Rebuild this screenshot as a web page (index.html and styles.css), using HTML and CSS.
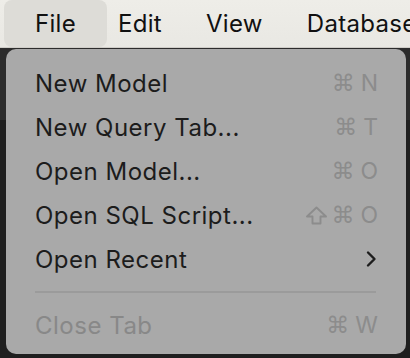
FILE: index.html
```html
<!DOCTYPE html>
<html lang="en">
<head>
    <meta charset="UTF-8">
    <meta name="viewport" content="width=device-width, initial-scale=1.0">
    <title>File menu</title>
    <link rel="stylesheet" href="styles.css">
</head>
<body>
    <nav class="menubar">
        <div class="menubar-item active">File</div>
        <div class="menubar-item">Edit</div>
        <div class="menubar-item">View</div>
        <div class="menubar-item">Database</div>
    </nav>

    <div class="stage">
        <div class="dropdown">
            <div class="menu-row">
                <span class="label">New Model</span>
                <span class="shortcut"><span class="cmd">&#8984;</span>N</span>
            </div>
            <div class="menu-row">
                <span class="label">New Query Tab...</span>
                <span class="shortcut"><span class="cmd">&#8984;</span>T</span>
            </div>
            <div class="menu-row">
                <span class="label">Open Model...</span>
                <span class="shortcut"><span class="cmd">&#8984;</span>O</span>
            </div>
            <div class="menu-row">
                <span class="label">Open SQL Script...</span>
                <span class="shortcut">
                    <svg class="shift" width="23" height="19" viewBox="0 0 23 19">
                        <path d="M11.5 1.5 L21 10.5 L15.5 10.5 L15.5 17.5 L7.5 17.5 L7.5 10.5 L2 10.5 Z" fill="none" stroke="#8c8c8c" stroke-width="1.9" stroke-linejoin="round"/>
                    </svg>
                    <span class="cmd">&#8984;</span>O
                </span>
            </div>
            <div class="menu-row">
                <span class="label">Open Recent</span>
                <svg class="chevron" width="14" height="20" viewBox="0 0 14 20">
                    <path d="M4 3.5 L10.5 10 L4 16.5" fill="none" stroke="#1d1d1d" stroke-width="2.4" stroke-linecap="round" stroke-linejoin="round"/>
                </svg>
            </div>
            <div class="separator"></div>
            <div class="menu-row disabled">
                <span class="label">Close Tab</span>
                <span class="shortcut"><span class="cmd">&#8984;</span>W</span>
            </div>
        </div>
    </div>
</body>
</html>
```

FILE: styles.css
```css
body {
    margin: 0;
    width: 410px;
    height: 358px;
    overflow: hidden;
    font-family: Inter, "Noto Sans", sans-serif;
    background-color: #1f1f1f;
}
.menubar {
    height: 47px;
    background: linear-gradient(to bottom, #eeede8, #e9e8e3);
    display: flex;
    align-items: stretch;
    gap: 44px;
    padding-left: 4px;
    border-bottom: 1px solid #cfcdc8;
}
.menubar-item {
    display: flex;
    align-items: center;
    flex-shrink: 0;
    font-size: 24px;
    letter-spacing: 0.3px;
    color: #111;
    white-space: nowrap;
}
.menubar-item.active {
    width: 103px;
    justify-content: center;
    background-color: #dddcd7;
    border-radius: 8px;
    margin-right: -33px;
}
.stage {
    padding: 1px 4px 0 6px;
    background: linear-gradient(to bottom, #2c2c2c 0, #2c2c2c 72px, #1f1f1f 72px);
}
.dropdown {
    height: 305px;
    background-color: #a9a9a9;
    border-radius: 10px;
    padding: 12px 28px 0 29px;
    box-sizing: border-box;
}
.menu-row {
    height: 44px;
    display: flex;
    align-items: center;
    justify-content: space-between;
    font-size: 24px;
    letter-spacing: 0.5px;
    color: #1c1c1c;
}
.shortcut {
    display: flex;
    align-items: center;
    color: #8c8c8c;
    font-size: 23px;
    letter-spacing: 0;
}
.shortcut .cmd {
    font-family: "DejaVu Sans", sans-serif;
    font-size: 23px;
    margin-right: 6px;
}
.shift {
    margin-right: 3px;
}
.separator {
    height: 2px;
    background-color: #9b9b9b;
    margin: 10px 2px 10px 0;
}
.menu-row.disabled {
    color: #888888;
}
```
